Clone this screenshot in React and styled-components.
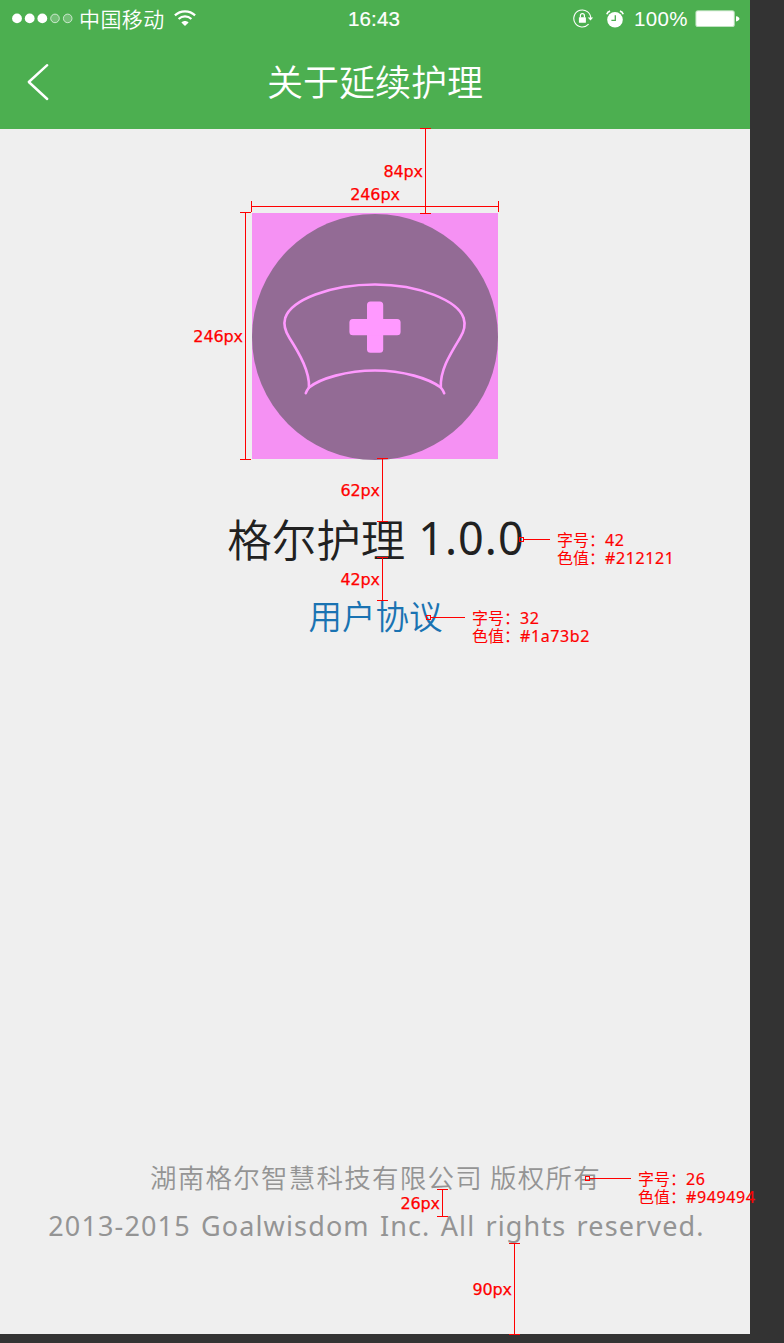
import React from "react";
import styled, { createGlobalStyle } from "styled-components";

const GlobalStyle = createGlobalStyle`
  * { box-sizing: border-box; }
  body { margin: 0; background: #333333; overflow: hidden; }
`;

const Board = styled.div`
  position: relative;
  width: 784px;
  height: 1343px;
  overflow: hidden;
  background: #333333;
  font-family: "Noto Sans", "Noto Sans CJK SC", sans-serif;
`;

const Phone = styled.div`
  display: flex;
  flex-direction: column;
  width: 750px;
  height: 1334px;
  background: #efefef;
`;

const Header = styled.header`
  height: 129px;
  background: #4caf50;
  color: #ffffff;
`;

const StatusBar = styled.div`
  display: grid;
  grid-template-columns: 1fr auto 1fr;
  align-items: center;
  height: 38px;
  padding: 0 10px 0 12px;
`;

const StatusGroup = styled.div`
  display: flex;
  align-items: center;
  justify-content: ${(p) => (p.$end ? "flex-end" : "flex-start")};
`;

const Carrier = styled.span`
  margin: 0 9px 2px 5px;
  font: 350 21px/30px "Noto Sans CJK SC", sans-serif;
  letter-spacing: 0.4px;
`;

const Clock = styled.span`
  margin-right: 4px;
  font: 400 20.5px/38px "Liberation Sans", sans-serif;
  letter-spacing: 0.1px;
  -webkit-text-stroke: 0.2px #ffffff;
`;

const AlarmSlot = styled.span`
  display: flex;
  margin-left: 12px;
`;

const Percent = styled.span`
  margin: 0 7px 0 10px;
  font: 400 20.5px/38px "Liberation Sans", sans-serif;
  letter-spacing: 0.4px;
`;

const NavBar = styled.div`
  display: grid;
  grid-template-columns: 80px 1fr 80px;
  align-items: center;
  height: 88px;
`;

const BackButton = styled.button`
  display: flex;
  padding: 0 0 0 26px;
  border: 0;
  background: none;
  color: inherit;
`;

const Title = styled.h1`
  margin: 0 0 4px 0;
  text-align: center;
  font: 350 36px/52px "Noto Sans CJK SC", sans-serif;
`;

const Main = styled.main`
  display: flex;
  flex: 1;
  flex-direction: column;
  align-items: center;
  padding-top: 84px;
`;

const Logo = styled.svg`
  display: block;
  width: 246px;
  height: 246px;
  overflow: visible;
  background: #f591f3;
`;

const AppName = styled.div`
  display: flex;
  align-items: flex-start;
  margin-top: 46px;
  padding-left: 2px;
  white-space: pre;
  color: #212121;
  font: 350 44.5px/66px "Noto Sans CJK SC", sans-serif;
`;

const Version = styled.span`
  margin-left: 3px;
  font: 400 45px/66px "Noto Sans", sans-serif;
  letter-spacing: 1px;
`;

const Agreement = styled.a`
  margin: 19px 0 0 1px;
  color: #1a73b2;
  font: 350 33.5px/50px "Noto Sans CJK SC", sans-serif;
`;

const Footer = styled.footer`
  display: flex;
  flex-direction: column;
  align-items: center;
  height: 177px;
  color: #949494;
  white-space: nowrap;
`;

const Company = styled.div`
  padding-left: 1px;
  font: 350 26.5px/40px "Noto Sans CJK SC", sans-serif;
  letter-spacing: 1.25px;
`;

const Rights = styled.div`
  margin-top: 9px;
  padding-left: 3px;
  font: 400 27px/40px "Noto Sans", sans-serif;
  letter-spacing: 1.14px;
  word-spacing: 2px;
`;

const RED = "#ff0000";

/* Dimension lines lie over the screen, placed at the distances they annotate. */
const Ruler = styled.div`
  position: absolute;
  left: ${(p) => p.$x}px;
  top: ${(p) => p.$y}px;
  width: ${(p) => (p.$horizontal ? p.$length : 11)}px;
  height: ${(p) => (p.$horizontal ? 11 : p.$length)}px;
  border: solid ${RED};
  border-width: ${(p) => (p.$horizontal ? "0 1px" : "1px 0")};
  background: linear-gradient(${RED}, ${RED}) center / ${(p) => (p.$horizontal ? "100% 1px" : "1px 100%")} no-repeat;
`;

const RulerLabel = styled.span`
  position: absolute;
  color: ${RED};
  font: 400 16px/18px "DejaVu Sans", sans-serif;
  letter-spacing: -0.1px;
  -webkit-text-stroke: 0.25px ${RED};
  white-space: nowrap;
  ${(p) =>
    p.$horizontal
      ? "left: 50%; bottom: 8px; transform: translateX(-50%);"
      : "right: 8px; top: 50%; margin-top: -8px;"}
`;

const Callout = styled.div`
  position: absolute;
  left: ${(p) => p.$x}px;
  top: ${(p) => p.$y}px;
  display: flex;
  align-items: flex-start;
  color: ${RED};
`;

const Anchor = styled.i`
  width: 5px;
  height: 5px;
  margin-top: 6px;
  border: 1px solid ${RED};
`;

const Leader = styled.i`
  width: ${(p) => p.$length}px;
  height: 1px;
  margin: 8px 7px 0 0;
  background: ${RED};
`;

const Spec = styled.div`
  font: 400 16px/16px "Noto Sans CJK SC", sans-serif;
  white-space: nowrap;
`;

const SpecRow = styled.div`
  display: flex;
  height: 18px;
`;

const SpecValue = styled.span`
  font: 400 16px/18px "Noto Sans", sans-serif;
  letter-spacing: 0.6px;
  -webkit-text-stroke: 0.2px ${RED};
`;

function Measure({ x, y, length, horizontal, children }) {
  return (
    <Ruler $x={x} $y={y} $length={length} $horizontal={horizontal}>
      <RulerLabel $horizontal={horizontal}>{children}</RulerLabel>
    </Ruler>
  );
}

function Note({ x, y, leader, size, color }) {
  return (
    <Callout $x={x} $y={y}>
      <Anchor />
      <Leader $length={leader} />
      <Spec>
        <SpecRow>字号：<SpecValue>{size}</SpecValue></SpecRow>
        <SpecRow>色值：<SpecValue>{color}</SpecValue></SpecRow>
      </Spec>
    </Callout>
  );
}

function SignalDots() {
  return (
    <svg width="62" height="12" viewBox="0 0 62 12">
      {[5, 17.7, 30.3].map((x) => <circle key={x} cx={x} cy="5.4" r="4.9" fill="#fff" />)}
      {[43, 55.7].map((x) => (
        <circle key={x} cx={x} cy="5.4" r="4.3" fill="#fff" fillOpacity=".22" stroke="#fff" strokeOpacity=".65" />
      ))}
    </svg>
  );
}

function WifiIcon() {
  return (
    <svg width="22" height="18" viewBox="0 0 22 18" fill="none" stroke="#fff" strokeWidth="2.2">
      <path d="M.9 5.4C6.5-.1 15.5-.1 21.1 5.4" />
      <path d="M4.6 9c3.6-3.4 9.2-3.4 12.8 0" />
      <path d="M7.4 12.4c2-2 5.2-2 7.2 0L11 16Z" fill="#fff" stroke="none" />
    </svg>
  );
}

function RotationLockIcon() {
  return (
    <svg width="21" height="20" viewBox="0 0 21 20" fill="none" stroke="#fff">
      <path d="M17.8 9.4A8.5 8.5 0 1 0 15.6 15.2" strokeWidth="1.1" />
      <path d="M14.7 8.5h5.4L17.5 11.6Z" fill="#fff" stroke="none" />
      <rect x="5.9" y="8.2" width="7" height="5.5" rx=".5" fill="#fff" stroke="none" />
      <path d="M7.4 8.5V6.7a2 2 0 0 1 4 0V8.5" strokeWidth="1.2" />
    </svg>
  );
}

function AlarmIcon() {
  return (
    <svg width="18" height="19" viewBox="0 0 18 19" fill="none">
      <circle cx="9" cy="9.8" r="7.8" fill="#fff" />
      <path d="M9.3 5.3v5H5.4" stroke="#4caf50" strokeWidth="1.3" />
      <path d="M.8 4.2c.5-1.6 1.6-2.7 3.3-3.1M17.2 4.2c-.5-1.6-1.6-2.7-3.3-3.1" stroke="#fff" strokeWidth="1.7" />
    </svg>
  );
}

function BatteryIcon() {
  return (
    <svg width="45" height="18" viewBox="0 0 45 18">
      <rect x=".4" y=".3" width="39.4" height="16.8" rx="2.6" fill="#fff" fillOpacity=".65" />
      <rect x="1.4" y="1.3" width="37.4" height="14.8" rx="1.6" fill="#fff" />
      <path d="M41 6.2c4.6.6 4.6 4.6 0 5.2Z" fill="#fff" />
    </svg>
  );
}

export default function App() {
  return (
    <Board>
      <GlobalStyle />
      <Phone>
        <Header>
          <StatusBar>
            <StatusGroup>
              <SignalDots />
              <Carrier>中国移动</Carrier>
              <WifiIcon />
            </StatusGroup>
            <Clock>16:43</Clock>
            <StatusGroup $end>
              <RotationLockIcon />
              <AlarmSlot>
                <AlarmIcon />
              </AlarmSlot>
              <Percent>100%</Percent>
              <BatteryIcon />
            </StatusGroup>
          </StatusBar>
          <NavBar>
            <BackButton aria-label="返回">
              <svg width="24" height="38" viewBox="0 0 24 38" fill="none" stroke="#fff" strokeWidth="2.4" strokeLinecap="round" strokeLinejoin="round">
                <path d="M21.2 2.2 2.8 19l18.4 17" />
              </svg>
            </BackButton>
            <Title>关于延续护理</Title>
          </NavBar>
        </Header>
        <Main>
          <Logo viewBox="0 0 246 246">
            <circle cx="123" cy="124" r="123" fill="#936b95" />
            <g fill="none" stroke="#ff99ff" strokeWidth="2.6" strokeLinecap="round" strokeLinejoin="round">
              <path d="M53.8 180.2C54.5 178 55.5 176.5 57 174.5C57.8 159 48 141.5 37.5 125C34 119.5 31 112.5 33.2 105C39 87 78 71.5 123 71.5C168 71.5 206 88 211.6 105C214 112.5 211.5 119.5 208 125C198 141.5 188 157 188.8 174.5C190 176 191.3 178 192.2 180.2" />
              <path d="M57 174.5C68 165.5 95 157.5 123 157.5C151 157.5 177 165.5 188.8 174.5" />
            </g>
            <g fill="#ff99ff">
              <rect x="115" y="88.4" width="16.2" height="51.4" rx="3.5" />
              <rect x="97.4" y="106" width="51.2" height="16.2" rx="3.5" />
            </g>
          </Logo>
          <AppName>格尔护理 <Version>1.0.0</Version></AppName>
          <Agreement>用户协议</Agreement>
        </Main>
        <Footer>
          <Company>湖南格尔智慧科技有限公司 版权所有</Company>
          <Rights>2013-2015 Goalwisdom Inc. All rights reserved.</Rights>
        </Footer>
      </Phone>
      <Measure x={420} y={128} length={86}>84px</Measure>
      <Measure x={251} y={201} length={248} horizontal>246px</Measure>
      <Measure x={240} y={212} length={248}>246px</Measure>
      <Measure x={377} y={458} length={64}>62px</Measure>
      <Measure x={377} y={557} length={44}>42px</Measure>
      <Measure x={437} y={1189} length={28}>26px</Measure>
      <Measure x={509} y={1243} length={92}>90px</Measure>
      <Note x={519} y={531} leader={26} size="42" color="#212121" />
      <Note x={426} y={609} leader={34} size="32" color="#1a73b2" />
      <Note x={585} y={1170} leader={41} size="26" color="#949494" />
    </Board>
  );
}
